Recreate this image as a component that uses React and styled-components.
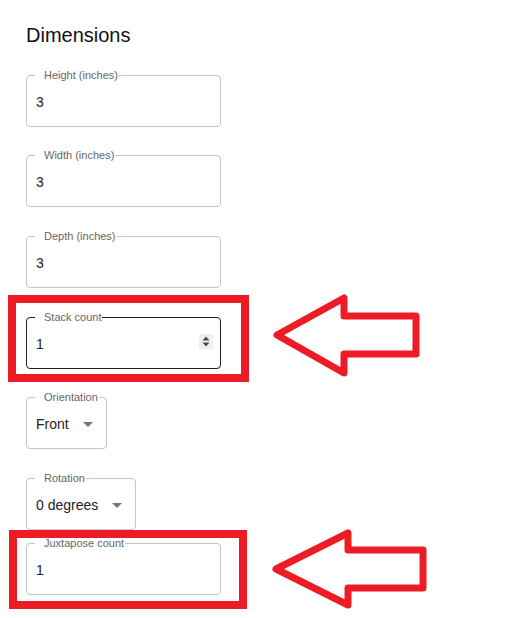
import React from "react";
import styled, { createGlobalStyle } from "styled-components";

const GlobalStyle = createGlobalStyle`
  html, body {
    margin: 0;
    background: #fff;
    font-family: "Liberation Sans", Arial, sans-serif;
  }
`;

const Page = styled.div`
  min-height: 100vh;
  box-sizing: border-box;
  padding: 0 0 24px 26px;
`;

const Title = styled.h2`
  margin: 23px 0 0;
  font-size: 20px;
  line-height: 24px;
  font-weight: 400;
  color: #111;
`;

const Annotated = styled.div`
  position: relative;
  width: max-content;
  margin-top: ${props => props.$gap}px;
`;

const Field = styled.fieldset`
  box-sizing: border-box;
  width: ${props => (props.$fit ? "max-content" : "195px")};
  min-width: 0;
  margin: ${props => props.$gap || 0}px 0 0;
  padding: 0;
  border: 1px solid ${props => (props.$active ? "#1f1f1f" : "#c4c4c4")};
  border-radius: 4px;
`;

const Label = styled.legend`
  margin-left: 8px;
  padding: 0 1px 0 9px;
  font-size: 11px;
  line-height: 13px;
  color: #666;
`;

const Value = styled.div`
  display: flex;
  align-items: center;
  justify-content: ${props => (props.$select ? "flex-start" : "space-between")};
  gap: 14px;
  padding: 10px ${props => (props.$select ? 13 : 7)}px 14px 9px;
  font-size: 14px;
  line-height: 20px;
  color: #222;
`;

const Spinner = styled.div`
  width: 14px;
  height: 15px;
  margin-bottom: 5px;
  background: #efefef;
  display: flex;
`;

const Frame = styled.div`
  position: absolute;
  box-sizing: border-box;
  border: 8px solid #ed1c24;
  pointer-events: none;
`;

const Arrow = styled.svg`
  position: absolute;
  overflow: visible;
`;

function Caret() {
  return (
    <svg width="10" height="5" viewBox="0 0 10 5">
      <polygon points="0,0 10,0 5,5" fill="#757575" />
    </svg>
  );
}

function SpinButtons() {
  return (
    <Spinner>
      <svg width="14" height="15" viewBox="0 0 14 15">
        <polygon points="3.5,6.5 10.5,6.5 7,2.5" fill="#4a4a4a" />
        <polygon points="3.5,8.5 10.5,8.5 7,12.5" fill="#4a4a4a" />
      </svg>
    </Spinner>
  );
}

function TextField({ label, value, gap, active, spinner }) {
  return (
    <Field $gap={gap} $active={active}>
      <Label>{label}</Label>
      <Value>
        <span>{value}</span>
        {spinner && <SpinButtons />}
      </Value>
    </Field>
  );
}

function SelectField({ label, value, gap }) {
  return (
    <Field $gap={gap} $fit>
      <Label>{label}</Label>
      <Value $select>
        <span>{value}</span>
        <Caret />
      </Value>
    </Field>
  );
}

// red callout drawn over a field: frame box + left-pointing arrow
function Callout({ gap, frame, arrow, children }) {
  return (
    <Annotated $gap={gap}>
      {children}
      <Frame
        style={{
          left: frame.x,
          top: frame.y,
          width: frame.w,
          height: frame.h,
        }}
      />
      <Arrow
        width="170"
        height="100"
        viewBox="0 0 170 100"
        style={{ left: arrow.x, top: arrow.y }}
      >
        <polygon
          points={arrow.points}
          fill="none"
          stroke="#ed1c24"
          strokeWidth="7"
          strokeLinejoin="round"
        />
      </Arrow>
    </Annotated>
  );
}

export default function App() {
  return (
    <Page>
      <GlobalStyle />
      <Title>Dimensions</Title>
      <TextField label="Height (inches)" value="3" gap={22} />
      <TextField label="Width (inches)" value="3" gap={22} />
      <TextField label="Depth (inches)" value="3" gap={23} />
      <Callout
        gap={23}
        frame={{ x: -18, y: -16, w: 241, h: 87 }}
        arrow={{ x: 234, y: -26, points: "17,50 84,13 84,31 156,31 156,69 84,69 84,88" }}
      >
        <TextField label="Stack count" value="1" active spinner />
      </Callout>
      <SelectField label="Orientation" value="Front" gap={22} />
      <SelectField label="Rotation" value="0 degrees" gap={23} />
      <Callout
        gap={7}
        frame={{ x: -17, y: -7, w: 238, h: 79 }}
        arrow={{ x: 234, y: -17, points: "16,49 88,13 88,30 163,30 163,68 88,68 88,85" }}
      >
        <TextField label="Juxtapose count" value="1" />
      </Callout>
    </Page>
  );
}
